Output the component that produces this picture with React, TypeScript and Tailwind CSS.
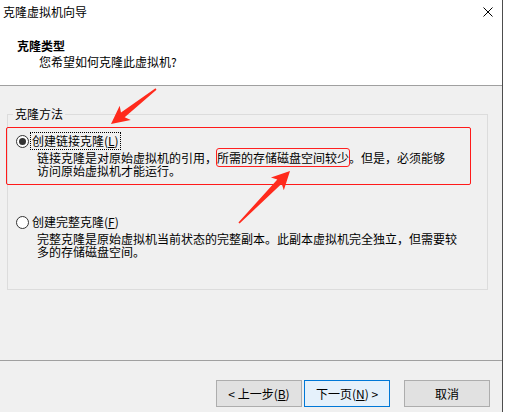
import type { ReactNode } from "react";

const FONT = { fontFamily: '"Noto Sans CJK SC", "Noto Sans", sans-serif' };

// red annotation arrow drawn from tail to tip
function Arrow({ x1, y1, x2, y2 }: { x1: number; y1: number; x2: number; y2: number }) {
    const dx = x2 - x1;
    const dy = y2 - y1;
    const len = Math.sqrt(dx * dx + dy * dy);
    const angle = (Math.atan2(dy, dx) * 180) / Math.PI;
    const pts = [
        [0, -0.8],
        [len - 15, -3],
        [len - 18, -9],
        [len, 0],
        [len - 18, 9],
        [len - 15, 3],
        [0, 0.8],
    ]
        .map((p) => p.join(","))
        .join(" ");
    return (
        <polygon
            points={pts}
            fill="#ff2a1c"
            transform={`translate(${x1} ${y1}) rotate(${angle})`}
        />
    );
}

function Radio({ checked }: { checked?: boolean }) {
    return (
        <span className="w-[13px] h-[13px] rounded-full border border-[#333] bg-white flex items-center justify-center shrink-0">
            {checked && <span className="w-[7px] h-[7px] rounded-full bg-[#333]" />}
        </span>
    );
}

function Button({ children, primary }: { children: ReactNode; primary?: boolean }) {
    return (
        <div
            className={
                primary
                    ? "w-[86px] h-[27px] flex items-center justify-center border border-[#0078d7] bg-[#e5f1fb]"
                    : "w-[86px] h-[27px] flex items-center justify-center border border-[#adadad] bg-[#e1e1e1]"
            }
        >
            {children}
        </div>
    );
}

export default function App() {
    return (
        <div
            className="relative w-[505px] h-[412px] flex bg-white text-[12px] text-black overflow-hidden"
            style={FONT}
        >
            <div className="w-[502px] h-full flex flex-col bg-[#f0f0f0]">
                {/* Header */}
                <div className="h-[85px] bg-white shrink-0">
                    <div className="h-[24px] flex items-center justify-between pl-[3px]">
                        <span className="leading-[16px]">克隆虚拟机向导</span>
                        <svg width="10" height="10" viewBox="0 0 10 10" className="mr-[9px]">
                            <path d="M0.5 0.5 L9.5 9.5 M9.5 0.5 L0.5 9.5" stroke="#000" strokeWidth="1" />
                        </svg>
                    </div>
                    <div className="mt-[14px] pl-[17px] font-bold leading-[16px]">克隆类型</div>
                    <div className="pl-[39px] leading-[16px]">您希望如何克隆此虚拟机?</div>
                </div>
                <div className="h-px bg-[#a0a0a0] shrink-0" />

                {/* Body */}
                <div className="h-[274px] pt-[21px] shrink-0">
                    <fieldset className="relative ml-[7px] w-[481px] h-[183px] border border-[#dcdcdc]">
                        <legend className="ml-[5px] px-[2px] leading-[14px]">克隆方法</legend>

                        <div className="pl-[8px] mt-[12px]">
                            <div className="h-[16px] flex items-center gap-[3px]">
                                <Radio checked />
                                <span className="leading-[14px] outline outline-1 outline-dotted outline-black outline-offset-[1px]">
                                    创建链接克隆(<span className="underline">L</span>)
                                </span>
                            </div>
                            <div className="mt-[2px] ml-[21px] w-[420px] leading-[13px]">
                                链接克隆是对原始虚拟机的引用，
                                <span className="outline outline-1 outline-[#ff2020] rounded-[2px]">所需的存储磁盘空间较少</span>
                                。但是，必须能够访问原始虚拟机才能运行。
                            </div>

                            <div className="mt-[37px] h-[16px] flex items-center gap-[3px]">
                                <Radio />
                                <span className="leading-[14px]">
                                    创建完整克隆(<span className="underline">F</span>)
                                </span>
                            </div>
                            <div className="mt-[2px] ml-[21px] w-[420px] leading-[13px]">
                                完整克隆是原始虚拟机当前状态的完整副本。此副本虚拟机完全独立，但需要较多的存储磁盘空间。
                            </div>
                        </div>

                        {/* annotation box */}
                        <div className="absolute left-[-2px] top-[6px] w-[465px] h-[58px] border border-[#ff1a1a] rounded-[2px] pointer-events-none" />
                    </fieldset>
                </div>
                <div className="h-px bg-[#a0a0a0] shrink-0" />

                {/* Footer */}
                <div className="flex-1 flex justify-end items-start pt-[19px] pr-[12px]">
                    <Button>
                        &lt; 上一步(<span className="underline">B</span>)
                    </Button>
                    <div className="ml-[2px]">
                        <Button primary>
                            下一页(<span className="underline">N</span>) &gt;
                        </Button>
                    </div>
                    <div className="ml-[14px]">
                        <Button>取消</Button>
                    </div>
                </div>
            </div>
            <div className="w-px h-full bg-[#4d4d4d]" />
            <div className="flex-1 bg-white" />

            {/* red arrows */}
            <svg className="absolute inset-0 pointer-events-none" width="505" height="412">
                <Arrow x1={156} y1={89} x2={111} y2={124} />
                <Arrow x1={239} y1={223} x2={290} y2={171} />
            </svg>
        </div>
    );
}
